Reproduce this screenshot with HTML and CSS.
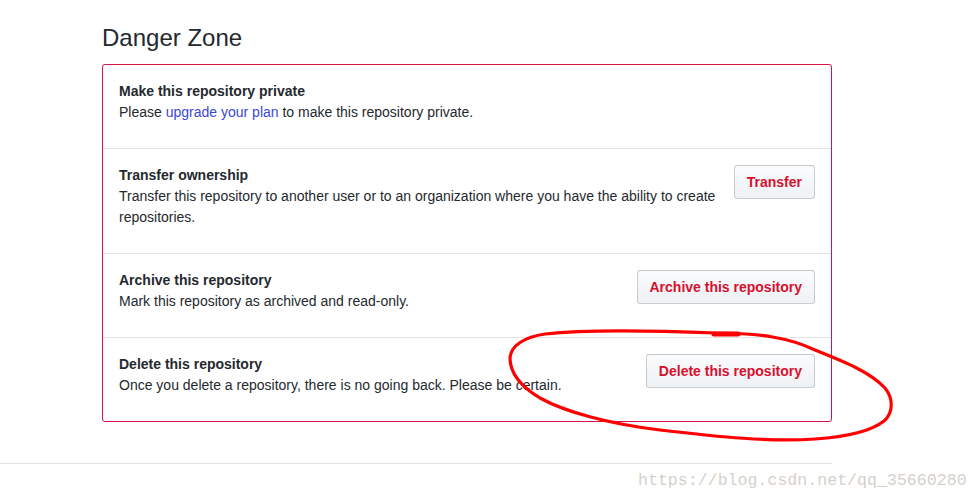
FILE: index.html
```html
<!DOCTYPE html>
<html lang="en">
<head>
    <meta charset="UTF-8">
    <meta name="viewport" content="width=device-width, initial-scale=1.0">
    <title>Danger Zone</title>
    <link rel="stylesheet" href="styles.css">
</head>
<body>
    <div class="container">
        <h2 class="subhead">Danger Zone</h2>

        <div class="danger-box">
            <div class="box-row">
                <strong class="row-title">Make this repository private</strong>
                <p class="row-text">Please <a class="link" href="#">upgrade your plan</a> to make this repository private.</p>
            </div>

            <div class="box-row">
                <button type="button" class="btn-danger">Transfer</button>
                <strong class="row-title">Transfer ownership</strong>
                <p class="row-text">Transfer this repository to another user or to an organization where you have the ability to create repositories.</p>
            </div>

            <div class="box-row">
                <button type="button" class="btn-danger">Archive this repository</button>
                <strong class="row-title">Archive this repository</strong>
                <p class="row-text">Mark this repository as archived and read-only.</p>
            </div>

            <div class="box-row">
                <button type="button" class="btn-danger">Delete this repository</button>
                <strong class="row-title">Delete this repository</strong>
                <p class="row-text">Once you delete a repository, there is no going back. Please be certain.</p>
            </div>
        </div>
    </div>

    <div class="footer-line"></div>
    <div class="watermark">https://blog.csdn.net/qq_35660280</div>

    <!-- hand-drawn circle round the delete button -->
    <svg class="scribble" width="979" height="500" viewBox="0 0 979 500">
        <path d="M716 333 C760 333 790 338 815 350 C845 362 870 372 885 388 C893 398 894 412 884 421 C870 432 845 437 815 439 C770 442 720 437 660 430 C610 424 565 412 540 398 C520 386 510 372 510 358 C511 345 525 337 545 334 C580 330 640 330 716 333 Z"
              fill="none" stroke="#ff0000" stroke-width="3.2" stroke-linejoin="round"/>
        <path d="M714 334 L738 334" stroke="#ff0000" stroke-width="5" stroke-linecap="round"/>
    </svg>
</body>
</html>
```

FILE: styles.css
```css
body {
    font-family: 'Liberation Sans', Arial, sans-serif;
    font-size: 14px;
    line-height: 1.5;
    color: #24292e;
    background-color: #fff;
    margin: 0;
    padding-top: 20px;
    position: relative;
    height: 480px;
    overflow: hidden;
}
.container {
    width: 730px;
    margin-left: 102px;
}
.subhead {
    font-size: 24px;
    font-weight: normal;
    line-height: 36px;
    margin: 0 0 8px 0;
}
.danger-box {
    border: 1px solid #d91248;
    border-radius: 3px;
}
.box-row {
    padding: 16px;
    border-top: 1px solid #e1e4e8;
}
.box-row:first-child {
    border-top: none;
}
.box-row::after {
    content: "";
    display: table;
    clear: both;
}
.row-title {
    display: block;
    font-weight: bold;
    line-height: 21px;
}
.row-text {
    margin: 0 0 9px 0;
    line-height: 21px;
}
.link {
    color: #3a48d4;
    text-decoration: none;
}
.btn-danger {
    float: right;
    margin-left: 16px;
    padding: 6px 12px;
    font-family: inherit;
    font-size: 14px;
    font-weight: bold;
    line-height: 20px;
    color: #d90f2e;
    background-image: linear-gradient(-180deg, #fafbfc 0%, #eff3f6 90%);
    border: 1px solid rgba(27, 31, 35, 0.2);
    border-radius: 3px;
    cursor: pointer;
}
.footer-line {
    width: 832px;
    margin-top: 41px;
    border-top: 1px solid #e1e4e8;
}
.watermark {
    margin: 5px 0 0 638px;
    font-family: 'Liberation Mono', 'DejaVu Sans Mono', monospace;
    font-size: 16.6px;
    line-height: 24px;
    color: #d5d1ca;
}
.scribble {
    position: absolute;
    left: 0;
    top: 0;
    pointer-events: none;
}
```
